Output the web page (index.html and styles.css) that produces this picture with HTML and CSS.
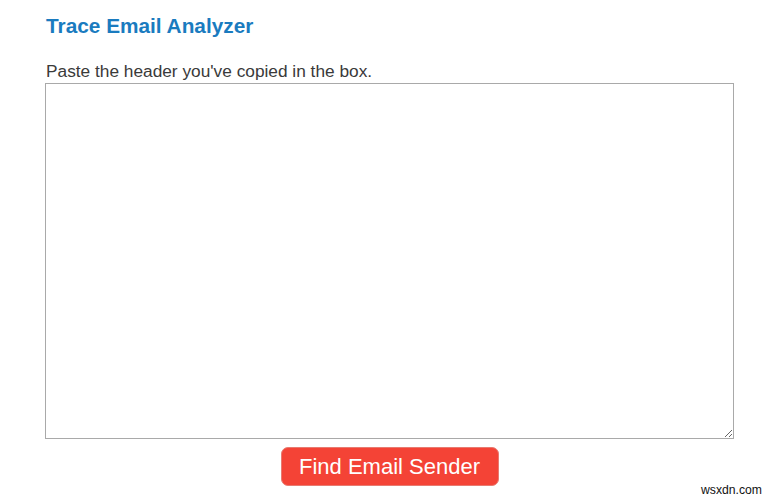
FILE: index.html
```html
<!DOCTYPE html>
<html>
<head>
<meta charset="utf-8">
<link rel="stylesheet" href="styles.css">
</head>
<body>
<div class="page">
  <h2 class="title">Trace Email Analyzer</h2>
  <p class="label">Paste the header you've copied in the box.</p>
  <textarea class="box"></textarea>
  <div class="actions">
    <button class="btn">Find Email Sender</button>
  </div>
</div>
<div class="mark">wsxdn.com</div>
</body>
</html>
```
FILE: styles.css
```css
html, body {
  margin: 0;
  padding: 0;
  background: #fff;
  font-family: "Liberation Sans", Arial, sans-serif;
}
.page {
  width: 689px;
  margin-left: 45px;
  padding-top: 12px;
}
.title {
  margin: 0 0 0 1px;
  font-size: 20.8px;
  font-weight: bold;
  color: #1a7bbf;
  line-height: 28px;
}
.label {
  margin: 21px 0 0 1px;
  font-size: 17.3px;
  color: #3a3a3a;
  line-height: 20px;
}
.box {
  display: block;
  box-sizing: border-box;
  width: 689px;
  height: 356px;
  margin-top: 2px;
  border: 1px solid #a9a9a9;
  resize: both;
}
.actions {
  display: flex;
  justify-content: center;
  margin-top: 8px;
}
.btn {
  width: 218px;
  height: 39px;
  background: #f44336;
  color: #fff;
  border: 1px solid #e87a70;
  border-radius: 7px;
  font-family: "Liberation Sans", Arial, sans-serif;
  font-size: 22px;
  padding: 0;
}
.mark {
  position: absolute;
  right: 12px;
  bottom: 3px;
  font-size: 12.2px;
  color: #111;
}
```
